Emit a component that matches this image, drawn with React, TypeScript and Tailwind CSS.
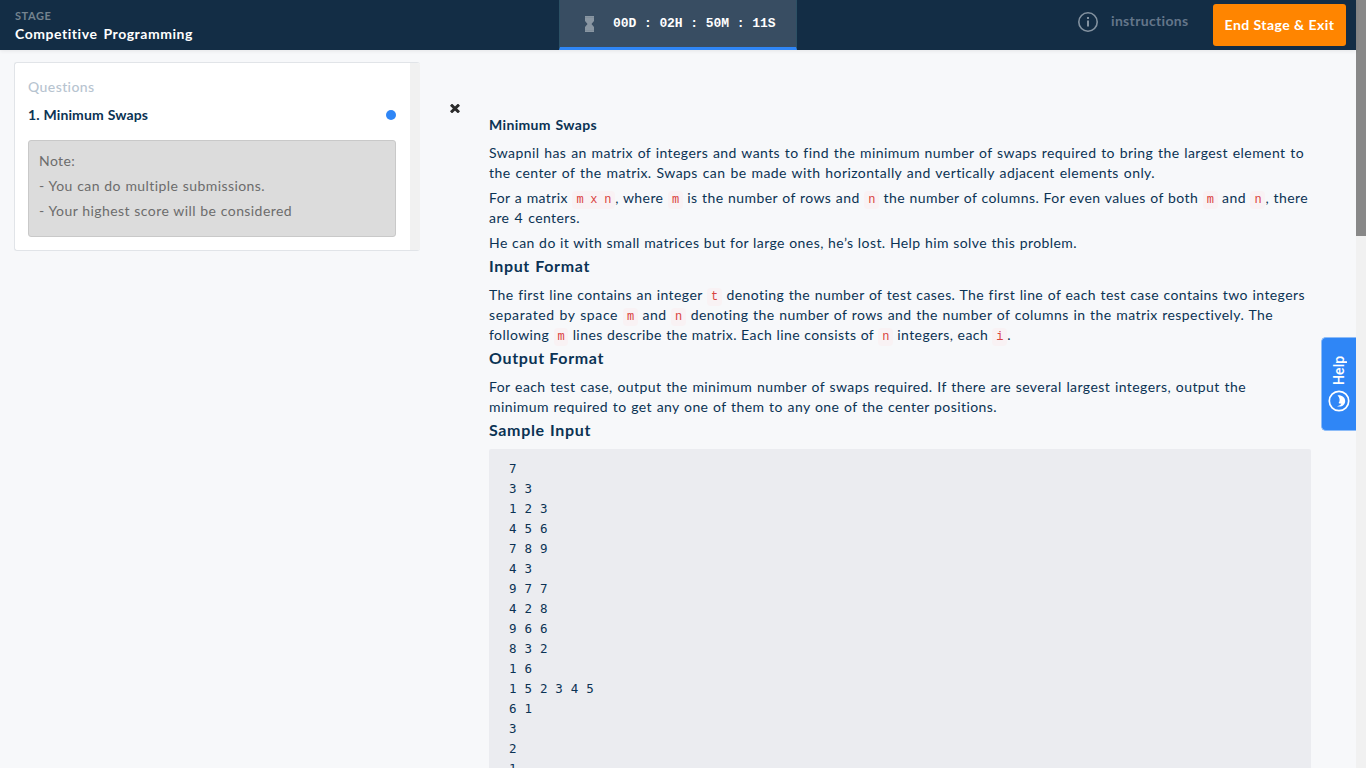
import React from "react";

function Code({ children }: { children: React.ReactNode }) {
  return (
    <code className="inline-block whitespace-pre rounded-[4px] bg-[#f9f2f4] px-1 py-[2px] align-baseline font-['Liberation_Mono',monospace] text-[12px] leading-[14px] tracking-[-0.27px] text-[#d9423f] [text-align-last:auto]">
      {children}
    </code>
  );
}

function Line({ w, children }: { w: string; children: React.ReactNode }) {
  return <div className={`h-5 whitespace-nowrap [text-align-last:justify] ${w}`}>{children}</div>;
}

function Heading({ w, children }: { w: string; children: React.ReactNode }) {
  return (
    <h4 className={`h-[27px] whitespace-nowrap text-[16px] font-bold leading-[15px] tracking-[0.65px] [text-align-last:justify] ${w}`}>
      {children}
    </h4>
  );
}

const sample = [
  "7", "3 3", "1 2 3", "4 5 6", "7 8 9", "4 3", "9 7 7", "4 2 8", "9 6 6",
  "8 3 2", "1 6", "1 5 2 3 4 5", "6 1", "3", "2", "1",
].join("\n");

function Header() {
  return (
    <header className="relative z-10 grid h-[50px] grid-cols-[559px_238px_559px] bg-[#132d45] shadow-[0_1px_4px_rgba(0,0,0,0.08)]">
      <div className="pl-[15px] pt-[9px]">
        <div className="w-9 whitespace-nowrap text-[11px] font-bold leading-[14px] tracking-[0.55px] text-[#74838f]">STAGE</div>
        <div className="mt-[2px] w-[178px] whitespace-nowrap text-[14px] font-bold leading-[18px] tracking-[0.55px] text-white [text-align-last:justify]">
          Competitive Programming
        </div>
      </div>
      <div className="flex items-center border-x border-b-[3px] border-x-[#2c5064] border-b-[#2f86f6] bg-[#384d62] pl-[25px]">
        <svg className="h-4 w-[9px]" viewBox="0 0 9 16" fill="#8996a2">
          <path d="M0 0h9v5L6.500 8 9 11v5H0v-5l2.500-3L0 5z" />
          <path d="M0 1.500h9M0 14.500h9" stroke="#7a8997" strokeWidth=".6" />
        </svg>
        <span className="ml-[19px] whitespace-pre font-['Liberation_Mono',monospace] text-[13px] font-bold tracking-[-0.07px] text-white">
          00D : 02H : 50M : 11S
        </span>
      </div>
      <div className="flex items-start justify-end pr-[10px]">
        <svg className="mt-3 h-5 w-5" viewBox="0 0 20 20" fill="none" stroke="#8392a0">
          <circle cx="10" cy="10" r="9.200" strokeWidth="1.600" />
          <path d="M10 8.500v6M10 5v2" strokeWidth="2" />
        </svg>
        <span className="ml-[13px] mt-[11px] w-[77px] whitespace-nowrap text-[14px] font-bold leading-5 tracking-[0.33px] text-[#64768a]">instructions</span>
        <button className="ml-[25px] mt-1 flex h-[42px] w-[133px] items-center justify-center whitespace-nowrap rounded-[3px] bg-[#ff8500] pb-[2px] text-[14px] font-bold tracking-[0.45px] text-white">
          End Stage &amp; Exit
        </button>
      </div>
    </header>
  );
}

function Sidebar() {
  return (
    <aside className="ml-[14px] mt-3 flex h-[189px] w-[406px] shrink-0 overflow-hidden rounded-[3px] border border-r-0 border-[#e1e4e8] bg-white">
      <div className="flex-1 pl-[13px] pr-[14px] pt-[14px]">
        <div className="text-[14px] font-medium leading-5 tracking-[0.42px] text-[#b7c4d0]">Questions</div>
        <div className="mt-2 flex items-center justify-between">
          <span className="w-[120px] whitespace-nowrap text-[14px] font-bold leading-5 tracking-[0.1px] text-[#0b3354] [text-align-last:justify]">1. Minimum Swaps</span>
          <span className="h-[10px] w-[10px] rounded-full bg-[#2f86f6]" />
        </div>
        <div className="mt-[15px] h-[97px] rounded-[3px] border border-[#c9c9c9] bg-[#dcdcdc] pl-[10px] pt-[10px] text-[14px] font-normal leading-5 tracking-[0.42px] text-[#6c6c6c]">
          <p className="mb-[5px]">Note:</p>
          <p className="mb-[5px] w-[226px] whitespace-nowrap [text-align-last:justify]">- You can do multiple submissions.</p>
          <p className="w-[253px] whitespace-nowrap [text-align-last:justify]">- Your highest score will be considered</p>
        </div>
      </div>
      <div className="w-[10px] bg-[#f1f1f1]" />
    </aside>
  );
}

export default function App() {
  return (
    <div className="flex h-screen overflow-hidden bg-[#f7f8fa] font-['Lato',sans-serif] text-[#0b3354]">
      <div className="flex w-[1356px] shrink-0 flex-col">
        <Header />
        <div className="flex min-h-0 flex-1">
          <Sidebar />
          <svg className="ml-[30px] mt-[54px] h-[9px] w-[10px] shrink-0" viewBox="0 0 10 9" fill="none" stroke="#2b2b2b" strokeWidth="2.900">
            <path d="M1 .6l8 7.800M9 .6L1 8.400" />
          </svg>
          <main className="ml-[29px] w-[822px] shrink-0 pt-[65px] text-[14px] font-normal leading-5 tracking-[0.42px]">
            <h3 className="mb-2 w-[108px] whitespace-nowrap font-bold tracking-[0.35px] [text-align-last:justify]">Minimum Swaps</h3>
            <div className="mb-[5px]">
              <Line w="w-[815px]">Swapnil has an matrix of integers and wants to find the minimum number of swaps required to bring the largest element to</Line>
              <Line w="w-[666px]">the center of the matrix. Swaps can be made with horizontally and vertically adjacent elements only.</Line>
            </div>
            <div className="mb-[5px]">
              <Line w="w-[819px]">For a matrix <Code>m x n</Code>, where <Code>m</Code> is the number of rows and <Code>n</Code> the number of columns. For even values of both <Code>m</Code> and <Code>n</Code>, there</Line>
              <Line w="w-[91px]">are 4 centers.</Line>
            </div>
            <div className="mb-[5px]">
              <Line w="w-[588px]">He can do it with small matrices but for large ones, he’s lost. Help him solve this problem.</Line>
            </div>
            <Heading w="w-[101px]">Input Format</Heading>
            <div className="mb-[5px]">
              <Line w="w-[816px]">The first line contains an integer <Code>t</Code> denoting the number of test cases. The first line of each test case contains two integers</Line>
              <Line w="w-[784px]"><span className="tracking-[0.6px]">separated by space </span><Code>m</Code> and <Code>n</Code> denoting the number of rows and the number of columns in the matrix respectively. The</Line>
              <Line w="w-[522px]">following <Code>m</Code> lines describe the matrix. Each line consists of <Code>n</Code> integers, each <Code>i</Code>.</Line>
            </div>
            <Heading w="w-[115px]">Output Format</Heading>
            <div className="mb-[5px]">
              <Line w="w-[757px]">For each test case, output the minimum number of swaps required. If there are several largest integers, output the</Line>
              <Line w="w-[508px]">minimum required to get any one of them to any one of the center positions.</Line>
            </div>
            <Heading w="w-[102px]">Sample Input</Heading>
            <pre className="rounded-[2px] bg-[#ebecf0] px-5 py-[10px] font-['DejaVu_Sans_Mono',monospace] text-[12.500px] font-normal leading-5 tracking-[0.2px]">{sample}</pre>
          </main>
        </div>
      </div>
      <div className="w-[10px] bg-[#f1f1f1]">
        <div className="h-[236px] bg-[#888]" />
      </div>
      <div className="absolute left-[1321px] top-[337px] z-20 flex h-[94px] w-[35px] flex-col items-center rounded-l-[5px] border border-r-0 border-[#8dbcf8] bg-[#2f86f6] pt-[18px] text-white">
        <span className="h-[29px] w-5 rotate-180 whitespace-nowrap font-['Roboto',sans-serif] text-[14px] font-medium leading-5 tracking-[0.1px] [writing-mode:vertical-rl]">Help</span>
        <svg className="mt-[5px] h-[22px] w-[22px]" viewBox="0 0 22 22">
          <circle cx="11" cy="11" r="9.700" fill="none" stroke="white" strokeWidth="1.700" />
          <path d="M9.500 5.200c4.600-.4 7.700 2.200 7.700 5.800 0 4-3.700 6.600-8.200 5.200 2.400-.4 3.800-1.300 4.300-2.700-1 .3-1.900.1-2.700-.5 1.700-2.400 1.300-5.400-1.100-7.800z" fill="white" />
        </svg>
      </div>
    </div>
  );
}
